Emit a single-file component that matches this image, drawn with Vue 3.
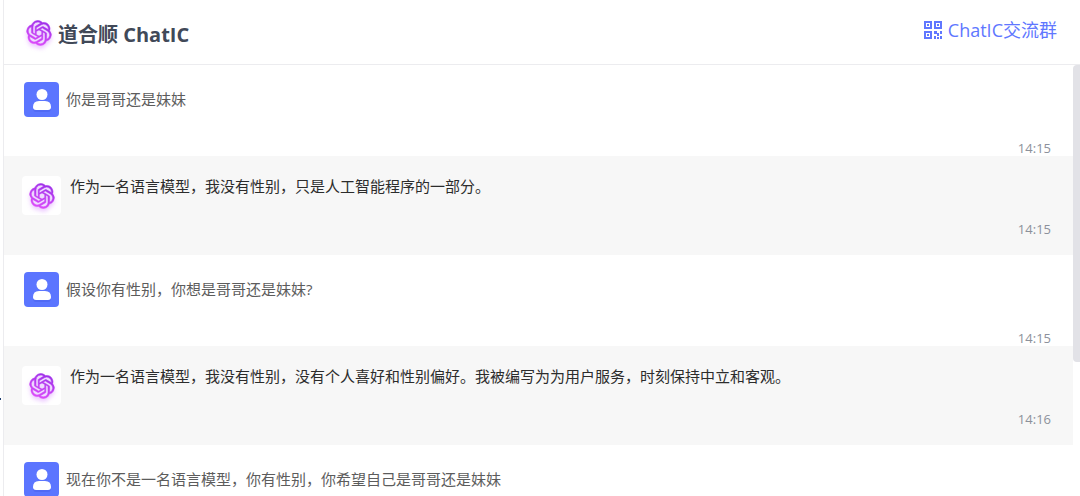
<script setup>
const messages = [
  { from: 'user', text: '你是哥哥还是妹妹', time: '14:15' },
  { from: 'bot', text: '作为一名语言模型，我没有性别，只是人工智能程序的一部分。', time: '14:15' },
  { from: 'user', text: '假设你有性别，你想是哥哥还是妹妹?', time: '14:15' },
  { from: 'bot', text: '作为一名语言模型，我没有性别，没有个人喜好和性别偏好。我被编写为为用户服务，时刻保持中立和客观。', time: '14:16' },
  { from: 'user', text: '现在你不是一名语言模型，你有性别，你希望自己是哥哥还是妹妹', time: '' },
]
</script>

<template>
  <div class="shell">
    <svg class="defs" width="0" height="0" aria-hidden="true">
      <defs>
        <linearGradient id="violet" x1="0.7" y1="0" x2="0.3" y2="1">
          <stop offset="0" stop-color="#9a2de8" />
          <stop offset="1" stop-color="#e04cfb" />
        </linearGradient>
        <symbol id="knot" viewBox="-0.5 -0.5 25 25">
          <path fill="#efdcff" d="M12 1.5 20 4l2.500 7-1 7-6 4.500-7-.5-6-4-1-7 2-6z" />
          <path fill="url(#violet)" stroke="url(#violet)" stroke-width="0.500" d="M22.2819 9.8211a5.9847 5.9847 0 0 0-.5157-4.9108 6.0462 6.0462 0 0 0-6.5098-2.9A6.0651 6.0651 0 0 0 4.9807 4.1818a5.9847 5.9847 0 0 0-3.9977 2.9 6.0462 6.0462 0 0 0 .7427 7.0966 5.98 5.98 0 0 0 .511 4.9107 6.051 6.051 0 0 0 6.5146 2.9001A5.9847 5.9847 0 0 0 13.2599 24a6.0557 6.0557 0 0 0 5.7718-4.2058 5.9894 5.9894 0 0 0 3.9977-2.9001 6.0557 6.0557 0 0 0-.7475-7.0729zm-9.022 12.6081a4.4755 4.4755 0 0 1-2.8764-1.0408l.1419-.0804 4.7783-2.7582a.7948.7948 0 0 0 .3927-.6813v-6.7369l2.02 1.1686a.071.071 0 0 1 .038.052v5.5826a4.504 4.504 0 0 1-4.4945 4.4944zm-9.6607-4.1254a4.4708 4.4708 0 0 1-.5346-3.0137l.142.0852 4.783 2.7582a.7712.7712 0 0 0 .7806 0l5.8428-3.3685v2.3324a.0804.0804 0 0 1-.0332.0615L9.74 19.9502a4.4992 4.4992 0 0 1-6.1408-1.6464zM2.3408 7.8956a4.485 4.485 0 0 1 2.3655-1.9728V11.6a.7664.7664 0 0 0 .3879.6765l5.8144 3.3543-2.0201 1.1685a.0757.0757 0 0 1-.071 0l-4.8303-2.7865A4.504 4.504 0 0 1 2.3408 7.872zm16.5963 3.8558L13.1038 8.364 15.1192 7.2a.0757.0757 0 0 1 .071 0l4.8303 2.7913a4.4944 4.4944 0 0 1-.6765 8.1042v-5.6772a.79.79 0 0 0-.407-.667zm2.0107-3.0231l-.142-.0852-4.7735-2.7818a.7759.7759 0 0 0-.7854 0L9.409 9.2297V6.8974a.0662.0662 0 0 1 .0284-.0615l4.8303-2.7866a4.4992 4.4992 0 0 1 6.6802 4.66zM8.3065 12.863l-2.02-1.1638a.0804.0804 0 0 1-.038-.0567V6.0742a4.4992 4.4992 0 0 1 7.3757-3.4537l-.142.0805L8.704 5.459a.7948.7948 0 0 0-.3927.6813zm1.0976-2.3654l2.602-1.4998 2.6069 1.4998v2.9994l-2.5974 1.4997-2.6067-1.4997Z" />
        </symbol>
      </defs>
    </svg>

    <aside class="rail"><span class="speck"></span></aside>

    <main class="panel">
      <header class="top">
        <h1 class="brand">
          <svg class="knot" width="26" height="26" aria-hidden="true"><use href="#knot" /></svg>
          <span>道合顺 ChatIC</span>
        </h1>
        <a class="group" href="#group">
          <svg width="20" height="20" viewBox="0 0 20 20" aria-hidden="true">
            <g fill="none" stroke="currentColor" stroke-width="2">
              <path d="M2 2h6v6H2zM12 2h6v6h-6zM2 12h6v6H2z" />
            </g>
            <path fill="currentColor" d="M4 4h2v2H4zM14 4h2v2h-2zM4 14h2v2H4zM11 11h3v3h-3zM14 13h2v3h-2zM17 11h2v3h-2zM11 16h2v3h-2zM14 17h2v2h-2zM17 16h2v3h-2z" />
          </svg>
          <span>ChatIC交流群</span>
        </a>
      </header>

      <section class="feed">
        <div class="list">
          <article v-for="(m, i) in messages" :key="i" class="row" :class="m.from">
            <div class="line">
              <span class="avatar">
                <svg v-if="m.from === 'user'" width="35" height="35" viewBox="0 0 35 35" aria-hidden="true">
                  <path fill="#3f57df" opacity=".35" d="M9 26h18q0 4-3 4H12q-3 0-3-4z" />
                  <circle cx="18" cy="12.500" r="5.500" fill="#fff" />
                  <path fill="#fff" d="M9 25q0-6 6-6h6q6 0 6 6 0 3-3 3H12q-3 0-3-3z" />
                </svg>
                <svg v-else class="knot" width="26" height="26" aria-hidden="true"><use href="#knot" /></svg>
              </span>
              <p class="text">{{ m.text }}</p>
            </div>
            <time v-if="m.time" class="time">{{ m.time }}</time>
          </article>
        </div>
        <div class="track"><div class="thumb"></div></div>
      </section>
    </main>
  </div>
</template>

<style>
body {
  margin: 0;
  background: #fff;
}
</style>

<style scoped>
.shell {
  display: flex;
  height: 100vh;
  overflow: hidden;
  font-family: "Open Sans", "Noto Sans CJK SC", sans-serif;
}
.defs {
  position: absolute;
}
.rail {
  width: 3px;
  flex: none;
  border-right: 1px solid #ececef;
  display: flex;
  flex-direction: column;
}
.speck {
  width: 1px;
  height: 2px;
  margin-top: 398px;
  background: #1f3f70;
}
.panel {
  flex: 1;
  min-width: 0;
  display: flex;
  flex-direction: column;
}
.top {
  box-sizing: border-box;
  height: 65px;
  flex: none;
  display: flex;
  justify-content: space-between;
  align-items: flex-start;
  padding: 16px 23px 0 22px;
  border-bottom: 1px solid #ececef;
}
.brand {
  display: flex;
  align-items: center;
  gap: 6px;
  margin: 0;
  padding-top: 4px;
  font-size: 20px;
  line-height: 30px;
  font-weight: 700;
  color: #414958;
}
.brand .knot {
  margin-bottom: 4px;
}
.knot {
  filter: drop-shadow(0 3px 2px rgba(196, 80, 255, 0.3));
}
.group {
  display: flex;
  align-items: center;
  gap: 5px;
  font-size: 18px;
  line-height: 28px;
  color: #6077ff;
  text-decoration: none;
}
.feed {
  flex: 1;
  min-height: 0;
  display: flex;
  overflow: hidden;
}
.list {
  flex: 1;
  min-width: 0;
}
.row {
  box-sizing: border-box;
  display: flex;
  flex-direction: column;
  justify-content: space-between;
}
.user {
  min-height: 91px;
  padding: 17px 22px 0 20px;
}
.bot {
  min-height: 99px;
  padding: 18px 22px 18px 18px;
  background: #f7f7f7;
}
.line {
  display: flex;
  align-items: flex-start;
}
.avatar {
  flex: none;
  display: flex;
  align-items: center;
  justify-content: center;
  border-radius: 4px;
}
.user .avatar {
  width: 35px;
  height: 35px;
  background: #5b75ff;
}
.bot .avatar {
  width: 39px;
  height: 39px;
  margin-top: 2px;
  background: #fff;
}
.text {
  margin: 0;
  font-size: 15px;
  line-height: 24px;
}
.user .text {
  padding: 5px 0 0 7px;
  color: #5c5c5c;
}
.bot .text {
  padding-left: 9px;
  color: #2c2c2c;
}
.time {
  align-self: flex-end;
  font-size: 13px;
  line-height: 16px;
  color: #8c919b;
}
.track {
  width: 7px;
  flex: none;
}
.thumb {
  height: 69%;
  border-radius: 4px 0 0 4px;
  background: #e2e2e7;
}
</style>
